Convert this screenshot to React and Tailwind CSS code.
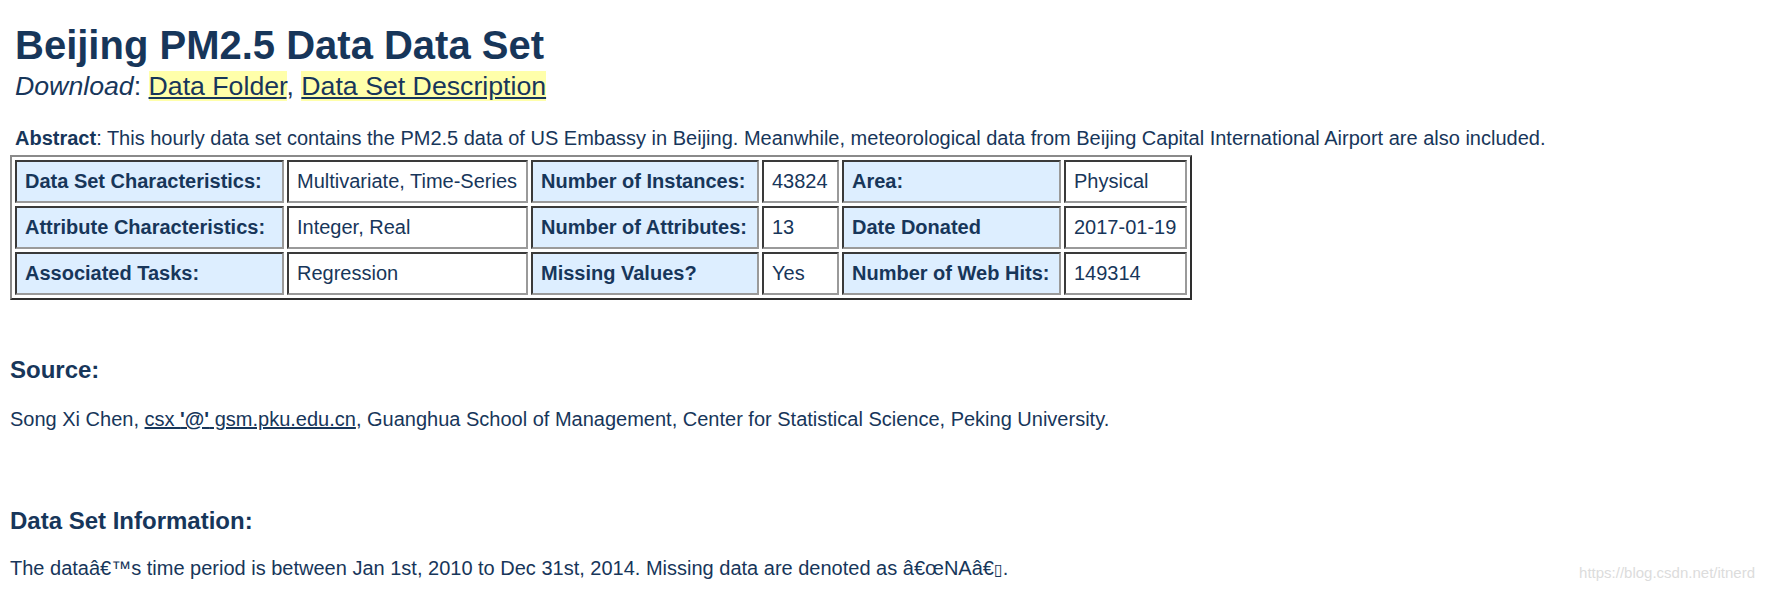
import React from "react";

const rows = [
  ["Data Set Characteristics:", "Multivariate, Time-Series", "Number of Instances:", "43824", "Area:", "Physical"],
  ["Attribute Characteristics:", "Integer, Real", "Number of Attributes:", "13", "Date Donated", "2017-01-19"],
  ["Associated Tasks:", "Regression", "Missing Values?", "Yes", "Number of Web Hits:", "149314"],
];

function Cell({ head, children }) {
  return (
    <div
      className={
        "border-2 border-t-[#3a3a3a] border-l-[#3a3a3a] border-b-[#9a9a9a] border-r-[#9a9a9a] px-[8px] py-[7px] text-[20px] leading-[25px] whitespace-nowrap " +
        (head ? "bg-[#ddeeff] font-bold" : "bg-white")
      }
    >
      {children}
    </div>
  );
}

export default function App() {
  return (
    <div className="relative min-h-[591px] bg-white pl-[10px] pt-[22px] font-['Liberation_Sans',Arial,sans-serif] text-[#17365a]">
      <div className="pl-[5px]">
        <h1 className="text-[40px] font-bold leading-[46px]">Beijing PM2.5 Data Data Set</h1>
        <div className="mt-[3px] text-[26.7px] leading-[31px]">
          <i>Download</i>:{" "}
          <a className="bg-[#ffffaa] underline" href="#">Data Folder</a>,{" "}
          <a className="bg-[#ffffaa] underline" href="#">Data Set Description</a>
        </div>
        <p className="mt-[25px] text-[20px] leading-[23px]">
          <b>Abstract</b>: This hourly data set contains the PM2.5 data of US Embassy in Beijing. Meanwhile, meteorological data from Beijing Capital International Airport are also included.
        </p>
      </div>

      <div className="mt-[5px] inline-grid grid-cols-[269px_241px_228px_77px_219px_123px] gap-[3px] border-2 border-t-[#8a8a8a] border-l-[#8a8a8a] border-b-[#2e2e2e] border-r-[#2e2e2e] p-[3px]">
        {rows.map((r, i) => (
          <React.Fragment key={i}>
            <Cell head>{r[0]}</Cell>
            <Cell>{r[1]}</Cell>
            <Cell head>{r[2]}</Cell>
            <Cell>{r[3]}</Cell>
            <Cell head>{r[4]}</Cell>
            <Cell>{r[5]}</Cell>
          </React.Fragment>
        ))}
      </div>

      <h2 className="mt-[56px] text-[24px] font-bold leading-[28px]">Source:</h2>
      <p className="mt-[24px] text-[20px] leading-[23px]">
        Song Xi Chen,{" "}
        <a className="underline" href="#">
          csx <b>'@'</b> gsm.pku.edu.cn
        </a>
        , Guanghua School of Management, Center for Statistical Science, Peking University.
      </p>

      <h2 className="mt-[76px] text-[24px] font-bold leading-[28px]">Data Set Information:</h2>
      <p className="mt-[22px] text-[20px] leading-[23px]">
        The dataâ€™s time period is between Jan 1st, 2010 to Dec 31st, 2014. Missing data are denoted as â€œNAâ€
        <span className="font-['DejaVu_Sans',sans-serif] text-[16px]">▯</span>.
      </p>

      <div className="absolute right-[18px] bottom-[7px] text-[15px] text-[#dcdcdc]">https://blog.csdn.net/itnerd</div>
    </div>
  );
}
